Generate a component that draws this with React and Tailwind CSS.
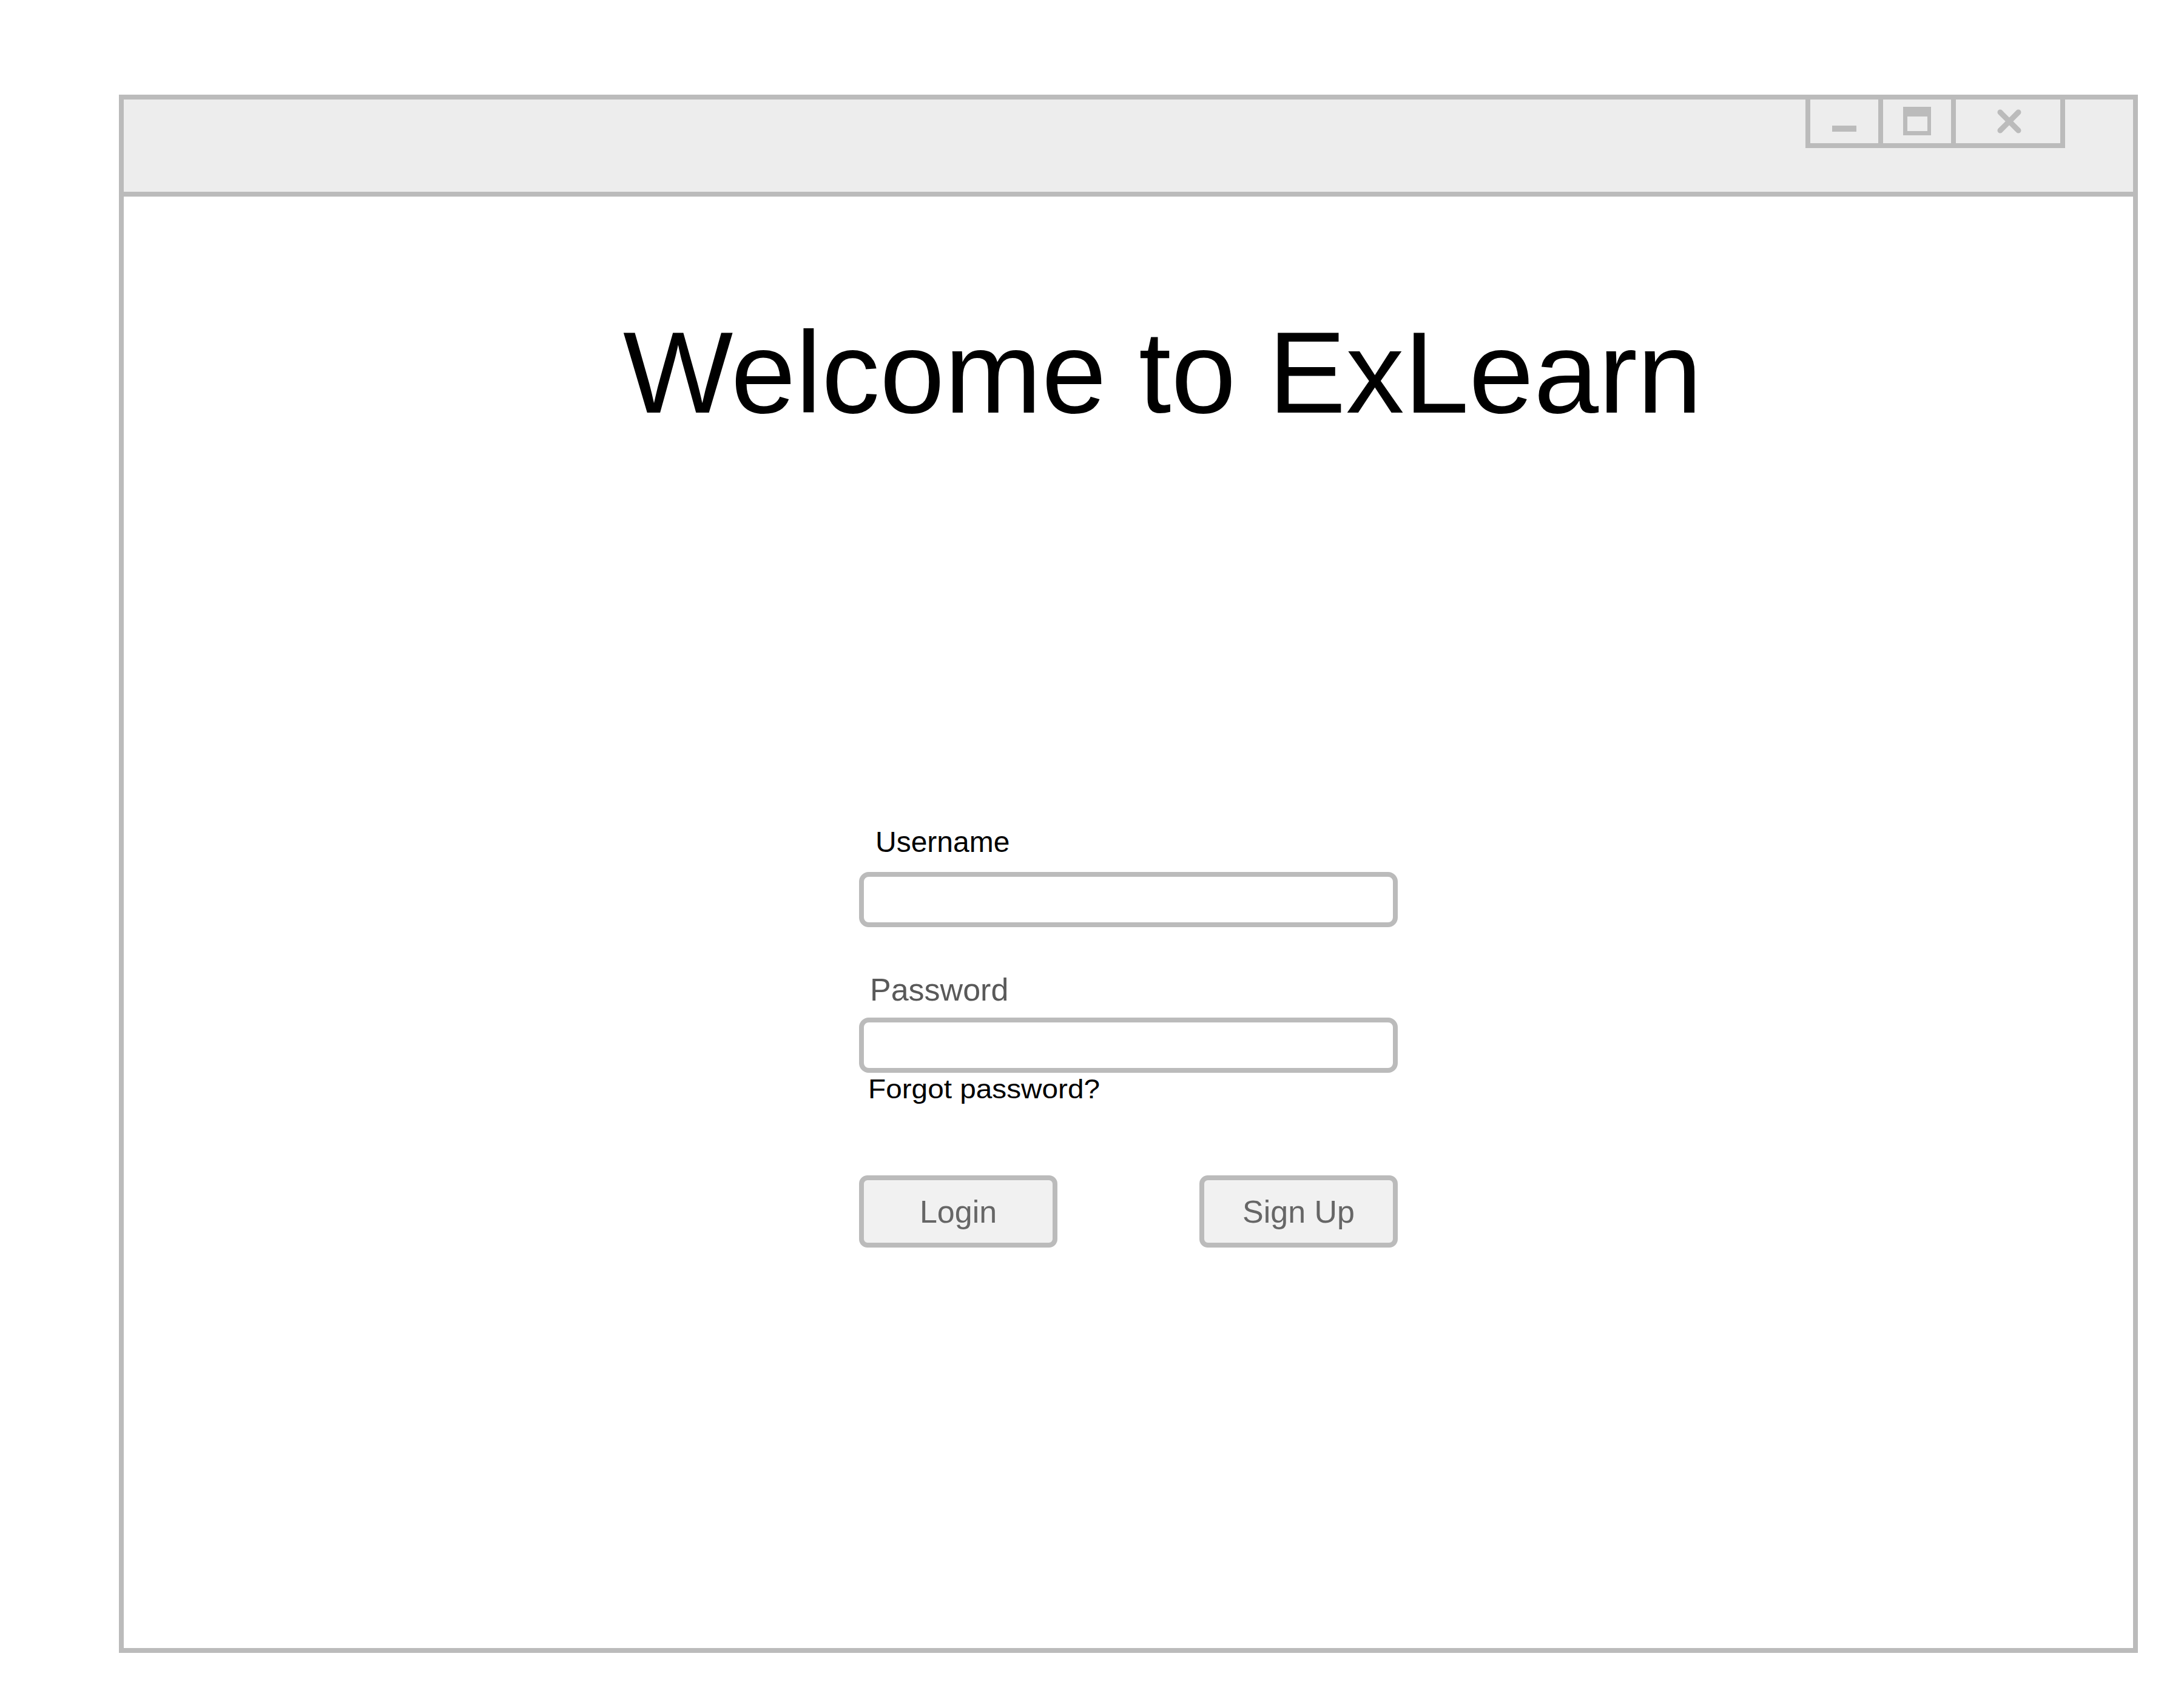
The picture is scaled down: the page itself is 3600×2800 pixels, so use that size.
import React from "react";

function TitleButtons() {
  return (
    <div className="flex h-[80px] border-x-[8px] border-b-[8px] border-[#bbbbbb]">
      <div className="w-[112px] h-[72px]">
        <svg width="112" height="72" viewBox="0 0 112 72">
          <rect x="36" y="43" width="40" height="10" fill="#bbbbbb" />
        </svg>
      </div>
      <div className="w-[120px] h-[72px] border-l-[8px] border-[#bbbbbb]">
        <svg width="112" height="72" viewBox="0 0 112 72">
          <rect x="33" y="12" width="46" height="47" fill="#bbbbbb" />
          <rect x="40" y="28" width="33" height="24" fill="#ededed" />
        </svg>
      </div>
      <div className="w-[180px] h-[72px] border-l-[8px] border-[#bbbbbb]">
        <svg width="172" height="72" viewBox="0 0 172 72">
          <g stroke="#bbbbbb" strokeWidth="9" strokeLinecap="round">
            <line x1="73" y1="21" x2="103" y2="51" />
            <line x1="103" y1="21" x2="73" y2="51" />
          </g>
        </svg>
      </div>
    </div>
  );
}

export default function App() {
  return (
    <div className="w-[3600px] h-[2800px] bg-white pl-[196px] pt-[156px] font-['Liberation_Sans',Arial,sans-serif]">
      <div className="w-[3328px] h-[2568px] border-[8px] border-[#bbbbbb] flex flex-col">
        <div className="h-[160px] shrink-0 bg-[#ededed] border-b-[8px] border-[#bbbbbb] flex justify-end items-start pr-[112px]">
          <TitleButtons />
        </div>
        <div className="flex-1 bg-white flex flex-col items-start">
          <h1 className="ml-[823px] mt-[194px] text-[192px] leading-none text-black font-normal whitespace-nowrap">
            Welcome to ExLearn
          </h1>
          <div className="ml-[1212px] w-[888px] mt-[654px] flex flex-col">
            <div className="pl-[27px] text-[48px] leading-none text-black">Username</div>
            <div className="mt-[25px] h-[91px] border-[8px] border-[#bbbbbb] rounded-[16px] bg-white"></div>
            <div className="mt-[77px] pl-[18px] text-[52px] leading-none text-[#595959]">Password</div>
            <div className="mt-[20px] h-[91px] border-[8px] border-[#bbbbbb] rounded-[16px] bg-white"></div>
            <div className="mt-[5px] pl-[15px]">
              <div className="text-[44px] leading-none text-black whitespace-nowrap origin-left scale-x-[1.085]">
                Forgot password?
              </div>
            </div>
            <div className="mt-[120px] flex justify-between">
              <button className="w-[327px] h-[119px] border-[8px] border-[#bbbbbb] rounded-[14px] bg-[#f1f1f1] flex items-center justify-center text-[52px] leading-none text-[#666666]">
                Login
              </button>
              <button className="w-[327px] h-[119px] border-[8px] border-[#bbbbbb] rounded-[14px] bg-[#f1f1f1] flex items-center justify-center text-[52px] leading-none text-[#666666]">
                Sign Up
              </button>
            </div>
          </div>
        </div>
      </div>
    </div>
  );
}
